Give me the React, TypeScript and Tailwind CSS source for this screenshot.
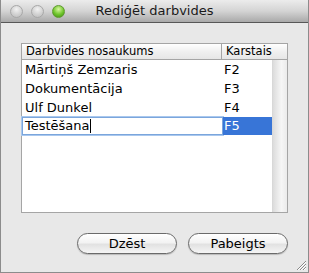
import React from 'react';

const rows = [
  { name: 'Mārtiņš Zemzaris', key: 'F2' },
  { name: 'Dokumentācija', key: 'F3' },
  { name: 'Ulf Dunkel', key: 'F4' },
];

const font = { fontFamily: '"Lucida Grande", "DejaVu Sans", sans-serif' };

function Light({ green }: { green?: boolean }) {
  return (
    <div
      className={
        green
          ? 'w-[13px] h-[13px] rounded-full border border-[#5f9a2f] bg-[radial-gradient(circle_at_50%_30%,#d8f7a0,#6fc52c_55%,#3f8a14)]'
          : 'w-[13px] h-[13px] rounded-full border border-[#a8a8a8] bg-[radial-gradient(circle_at_50%_30%,#f2f2f2,#cfcfcf_60%,#bdbdbd)]'
      }
    />
  );
}

function PillButton({ label }: { label: string }) {
  return (
    <button className="w-[100px] h-[21px] rounded-full border border-[#6a6a6a] bg-[linear-gradient(#ffffff,#f3f3f3_45%,#e2e2e2_55%,#f5f5f5)] shadow-[0_1px_1px_rgba(0,0,0,0.2)] text-[13px] text-black leading-none">
      {label}
    </button>
  );
}

export default function App() {
  return (
    <div
      className="relative w-[309px] h-[273px] flex flex-col bg-[#e8e8e8] border-x border-b border-[#8c8c8c] overflow-hidden"
      style={font}
    >
      <div className="h-[23px] shrink-0 flex items-center relative border-b border-[#575757] bg-[linear-gradient(#ececec,#d4d4d4_50%,#a9a9a9)]">
        <div className="flex gap-[8px] pl-[9px]">
          <Light />
          <Light />
          <Light green />
        </div>
        <div className="absolute inset-0 flex items-center justify-center text-[13px] text-[#1a1a1a]">
          Rediģēt darbvides
        </div>
      </div>

      <div className="flex-1 flex flex-col pl-[20px] pr-[20px] pt-[20px]">
        <div className="w-[267px] h-[170px] border border-[#a5a5a5] bg-white flex flex-col">
          <div className="h-[16px] shrink-0 flex border-b border-[#a5a5a5] bg-[linear-gradient(#ffffff,#f0f0f0_50%,#e6e6e6)] text-[11.5px] text-black leading-[15px]">
            <div className="w-[200px] pl-[4px] border-r border-[#a5a5a5]">Darbvides nosaukums</div>
            <div className="flex-1 pl-[4px]">Karstais</div>
          </div>
          <div className="flex-1 flex">
            <div className="w-[250px] flex flex-col text-[13px] text-black">
              {rows.map((r) => (
                <div key={r.key} className="h-[19px] flex items-center">
                  <div className="w-[201px] pl-[3px]">{r.name}</div>
                  <div className="flex-1 pl-[1px]">{r.key}</div>
                </div>
              ))}
              <div className="h-[18px] flex">
                <div className="w-[201px] flex items-center pl-[2px] border border-[#7ba6dc] shadow-[0_0_0_1px_#a9c8ee] bg-white">
                  <span>Testēšana</span>
                  <span className="w-px h-[14px] bg-black" />
                </div>
                <div className="flex-1 flex items-center pl-[1px] bg-[#3875d7] text-white">F5</div>
              </div>
            </div>
            <div className="flex-1 border-l border-[#d8d8d8] bg-[linear-gradient(90deg,#dcdcdc,#e9e9e9_30%,#f6f6f6_60%,#ebebeb)]" />
          </div>
        </div>

        <div className="flex justify-end gap-[11px] pt-[20px]">
          <PillButton label="Dzēst" />
          <PillButton label="Pabeigts" />
        </div>
      </div>

      {/* resize grip */}
      <svg className="absolute right-[1px] bottom-[1px]" width="11" height="11" viewBox="0 0 11 11">
        <path d="M1 10 L10 1 M4 10 L10 4 M7 10 L10 7" stroke="#8a8a8a" strokeWidth="1" />
        <path d="M2 10 L10 2 M5 10 L10 5 M8 10 L10 8" stroke="#ffffff" strokeWidth="1" />
      </svg>
    </div>
  );
}
